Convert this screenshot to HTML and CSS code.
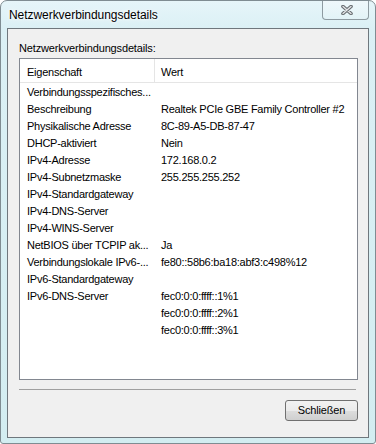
FILE: index.html
```html
<!DOCTYPE html>
<html lang="de">
<head>
<meta charset="utf-8">
<title>Netzwerkverbindungsdetails</title>
<link rel="stylesheet" href="styles.css">
</head>
<body>
<div class="window">
  <div class="titlebar">
    <span class="title">Netzwerkverbindungsdetails</span>
    <div class="close">
      <svg width="12" height="10" viewBox="0 0 12 10">
        <path d="M2 1.5 L10 8.5 M10 1.5 L2 8.5" stroke="#666c70" stroke-width="3.6" stroke-linecap="round" fill="none"/>
        <path d="M2 1.5 L10 8.5 M10 1.5 L2 8.5" stroke="#e2e4e6" stroke-width="1.4" stroke-linecap="round" fill="none"/>
      </svg>
    </div>
  </div>
  <div class="client">
    <div class="label">Netzwerkverbindungsdetails:</div>
    <div class="list">
      <div class="header">
        <div class="hcell hc1">Eigenschaft</div>
        <div class="hcell hc2">Wert</div>
      </div>
      <div class="rows">
        <div class="row"><span class="c1">Verbindungsspezifisches...</span><span class="c2"></span></div>
        <div class="row"><span class="c1">Beschreibung</span><span class="c2">Realtek PCIe GBE Family Controller #2</span></div>
        <div class="row"><span class="c1">Physikalische Adresse</span><span class="c2">8C-89-A5-DB-87-47</span></div>
        <div class="row"><span class="c1">DHCP-aktiviert</span><span class="c2">Nein</span></div>
        <div class="row"><span class="c1">IPv4-Adresse</span><span class="c2">172.168.0.2</span></div>
        <div class="row"><span class="c1">IPv4-Subnetzmaske</span><span class="c2">255.255.255.252</span></div>
        <div class="row"><span class="c1">IPv4-Standardgateway</span><span class="c2"></span></div>
        <div class="row"><span class="c1">IPv4-DNS-Server</span><span class="c2"></span></div>
        <div class="row"><span class="c1">IPv4-WINS-Server</span><span class="c2"></span></div>
        <div class="row"><span class="c1">NetBIOS über TCPIP ak...</span><span class="c2">Ja</span></div>
        <div class="row"><span class="c1">Verbindungslokale IPv6-...</span><span class="c2">fe80::58b6:ba18:abf3:c498%12</span></div>
        <div class="row"><span class="c1">IPv6-Standardgateway</span><span class="c2"></span></div>
        <div class="row"><span class="c1">IPv6-DNS-Server</span><span class="c2">fec0:0:0:ffff::1%1</span></div>
        <div class="row"><span class="c1"></span><span class="c2">fec0:0:0:ffff::2%1</span></div>
        <div class="row"><span class="c1"></span><span class="c2">fec0:0:0:ffff::3%1</span></div>
      </div>
    </div>
    <div class="sep"></div>
    <div class="buttons">
      <button class="btn" type="button">Schließen</button>
    </div>
  </div>
</div>
</body>
</html>
```
FILE: styles.css
```css
html, body {
  margin: 0;
  padding: 0;
  background: #ffffff;
}

.window {
  box-sizing: border-box;
  width: 376px;
  height: 444px;
  border: 1px solid #7f8c92;
  border-radius: 7px 7px 3px 3px;
  background: linear-gradient(to bottom, #e6f5f9 0px, #dbf0f5 28px, #d3edf1 100%);
  padding: 0 6px 5px 6px;
  display: flex;
  flex-direction: column;
  font-family: "Liberation Sans", Arial, sans-serif;
  color: #000;
}

.titlebar {
  height: 27px;
  display: flex;
  justify-content: space-between;
  align-items: flex-start;
  flex: none;
}

.title {
  font-family: "Liberation Sans", Arial, sans-serif;
  font-size: 12px;
  line-height: 15px;
  padding: 7px 0 0 2px;
  color: #000;
  letter-spacing: -0.05px;
  text-shadow: 0 0 6px #ffffff, 0 0 3px #ffffff;
}

.close {
  box-sizing: border-box;
  width: 47px;
  height: 19px;
  border: 1px solid #8e9ba1;
  border-top: none;
  border-radius: 0 0 4px 4px;
  background: linear-gradient(to bottom, rgba(255,255,255,0.35), rgba(255,255,255,0.1));
  display: flex;
  align-items: center;
  justify-content: center;
  padding-left: 2px;
  padding-bottom: 1px;
}

.close svg {
  display: block;
}

.client {
  flex: 1;
  border: 1px solid #6f777d;
  background: #f0f0f0;
  padding: 13px 10px 16px 11px;
  display: flex;
  flex-direction: column;
  font-size: 11px;
  line-height: 13px;
}

.label {
  height: 13px;
  white-space: nowrap;
  letter-spacing: -0.15px;
}

.list {
  margin-top: 3px;
  flex: 1;
  border: 1px solid #828790;
  background: #ffffff;
  display: flex;
  flex-direction: column;
  letter-spacing: -0.25px;
}

.header {
  display: flex;
  height: 23px;
  border-bottom: 1px solid #e5e5e5;
  flex: none;
}

.hcell {
  box-sizing: border-box;
  padding-top: 7px;
  white-space: nowrap;
}

.hc1 {
  width: 135px;
  padding-left: 7px;
  border-right: 1px solid #e5e5e5;
}

.hc2 {
  flex: 1;
  padding-left: 6px;
}

.rows {
  padding-top: 1px;
}

.row {
  display: grid;
  grid-template-columns: 135px 1fr;
  height: 17px;
  line-height: 17px;
  white-space: nowrap;
}

.c1 {
  padding-left: 7px;
  overflow: hidden;
}

.c2 {
  padding-left: 6px;
  overflow: hidden;
}

.sep {
  margin-top: 9px;
  margin-right: 2px;
  height: 1px;
  background: #a0a0a0;
  flex: none;
}

.buttons {
  margin-top: 10px;
  display: flex;
  justify-content: flex-end;
  flex: none;
}

.btn {
  box-sizing: border-box;
  width: 73px;
  height: 21px;
  border: 1px solid #707070;
  border-radius: 3px;
  background: linear-gradient(to bottom, #f2f2f2 0%, #ebebeb 50%, #dddddd 51%, #cfcfcf 100%);
  font-family: "Liberation Sans", Arial, sans-serif;
  font-size: 11px;
  line-height: 19px;
  letter-spacing: -0.15px;
  padding: 0;
  color: #000;
}
```
